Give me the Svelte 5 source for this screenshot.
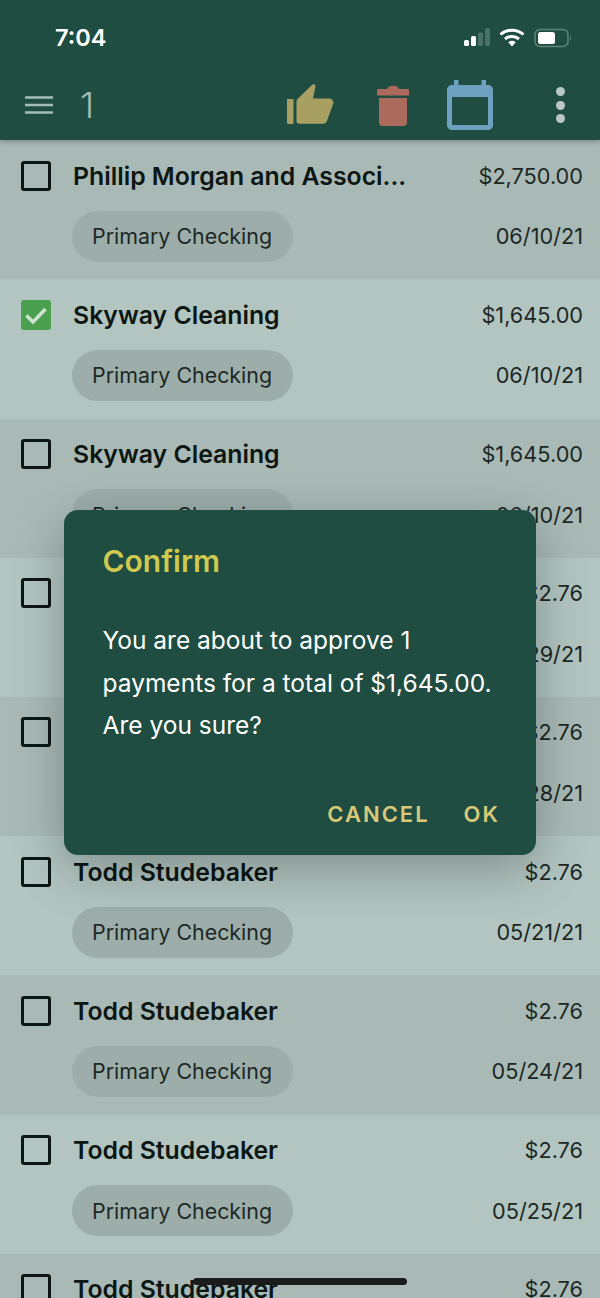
<script>
  const rows = [
    { name: 'Phillip Morgan and Associ...', amount: '$2,750.00', date: '06/10/21' },
    { name: 'Skyway Cleaning', amount: '$1,645.00', date: '06/10/21', checked: true },
    { name: 'Skyway Cleaning', amount: '$1,645.00', date: '06/10/21' },
    { name: 'Todd Studebaker', amount: '$2.76', date: '05/29/21' },
    { name: 'Todd Studebaker', amount: '$2.76', date: '05/28/21' },
    { name: 'Todd Studebaker', amount: '$2.76', date: '05/21/21' },
    { name: 'Todd Studebaker', amount: '$2.76', date: '05/24/21' },
    { name: 'Todd Studebaker', amount: '$2.76', date: '05/25/21' },
    { name: 'Todd Studebaker', amount: '$2.76', date: '05/26/21' }
  ];
</script>

<div class="screen">
  <header class="header">
    <div class="status">
      <span class="time">7:04</span>
      <div class="status-icons">
        <svg width="26" height="20" viewBox="0 0 26 20">
          <rect x="0" y="12" width="5" height="6" rx="1.500" fill="#fff" />
          <rect x="7" y="8" width="5" height="10" rx="1.500" fill="#fff" />
          <rect x="14" y="4.500" width="5" height="13.500" rx="1.500" fill="#4a7267" />
          <rect x="21" y="0" width="5" height="18" rx="1.500" fill="#4a7267" />
        </svg>
        <svg width="26" height="20" viewBox="0 0 26 20">
          <path d="M1.500 6.500C8 .7 18 .7 24.500 6.500" fill="none" stroke="#fff" stroke-width="3" />
          <path d="M6 11C10 7.500 16 7.500 20 11" fill="none" stroke="#fff" stroke-width="3" />
          <path d="M9.300 14.200C11.500 12.400 14.500 12.400 16.700 14.200L13 18.500Z" fill="#fff" />
        </svg>
        <svg width="39" height="20" viewBox="0 0 39 20">
          <rect x="1" y="1.500" width="33" height="17" rx="5" fill="none" stroke="#5f8579" stroke-width="1.500" />
          <rect x="4" y="4" width="17" height="12" rx="2.500" fill="#fff" />
          <path d="M36 7.500c1.500.5 1.500 4.500 0 5Z" fill="#5f8579" />
        </svg>
      </div>
    </div>
    <div class="toolbar">
      <svg class="menu" width="28" height="20" viewBox="0 0 28 20">
        <path d="M0 2.500H28M0 10H28M0 17.500H28" stroke="#a4bdb7" stroke-width="2.500" />
      </svg>
      <span class="count">1</span>
      <div class="actions">
        <svg class="thumb" width="47" height="42" viewBox="0 0 47 42">
          <path d="M0 15h6.500v25H1.500a1.500 1.500 0 0 1-1.500-1.500Z" fill="#a89f63" />
          <path d="M12 39.800c-1.500 0-2.500-1-2.500-2.500V17.500c0-1 .4-1.800 1-2.500L25.500 .5c1-.8 3-.3 3 1.500L26 14.500h16c3.200 0 5 2.500 4.200 5.200L40 36.800c-.8 2-2 3-4 3Z" fill="#a89f63" />
        </svg>
        <svg class="trash" width="32" height="42" viewBox="0 0 32 42">
          <path d="M0 6.500C0 5.500.7 5 1.500 5H10C11 3 13 1.800 16 1.800S21 3 22 5h8.500c.8 0 1.500.5 1.500 1.500v5H0Z" fill="#ac6a5c" />
          <path d="M2 14H30V38.500C30 40.500 28.500 42 26.500 42H5.500C3.500 42 2 40.500 2 38.500Z" fill="#ac6a5c" />
        </svg>
        <svg class="calendar" width="46" height="50" viewBox="0 0 46 50">
          <path d="M7 0h4.500v5h23V0H39v5h2c2.800 0 5 2 5 5v35c0 2.800-2.200 5-5 5H5c-2.800 0-5-2.200-5-5V10c0-3 2.200-5 5-5h2Z M5 17v28h36V17Z" fill="#6ea0bf" fill-rule="evenodd" />
        </svg>
        <div class="dots"><i></i><i></i><i></i></div>
      </div>
    </div>
  </header>

  <div class="list">
    {#each rows as row, i}
      <div class="row" class:alt={i % 2 === 1}>
        <div class="check" class:checked={row.checked}>
          {#if row.checked}
            <svg width="30" height="30" viewBox="0 0 30 30">
              <path d="M5.500 15.500L12 22L24.500 9" fill="none" stroke="#cfe3d2" stroke-width="3.500" />
            </svg>
          {/if}
        </div>
        <div class="body">
          <div class="line">
            <span class="name">{row.name}</span>
            <span class="amount">{row.amount}</span>
          </div>
          <div class="line lower">
            <span class="pill">Primary Checking</span>
            <span class="date">{row.date}</span>
          </div>
        </div>
      </div>
    {/each}
  </div>

  <div class="dialog">
    <h2>Confirm</h2>
    <p>You are about to approve 1 payments for a total of $1,645.00. Are you sure?</p>
    <div class="buttons">
      <span>CANCEL</span>
      <span>OK</span>
    </div>
  </div>

  <div class="home-bar"></div>
</div>

<style>
  :global(body) {
    margin: 0;
  }

  .screen {
    position: relative;
    width: 600px;
    height: 1298px;
    overflow: hidden;
    background: #b2c5c1;
    font-family: Inter, "Liberation Sans", sans-serif;
    color: #0c1613;
  }

  .header {
    position: relative;
    z-index: 1;
    height: 140px;
    box-sizing: border-box;
    background: #1f4d42;
    box-shadow: 0 2px 5px rgba(0, 0, 0, 0.25);
  }

  .status {
    display: flex;
    justify-content: space-between;
    align-items: center;
    height: 75px;
    padding: 0 27px 0 55px;
  }

  .time {
    font-size: 23.500px;
    font-weight: 600;
    color: #fff;
  }

  .status-icons {
    display: flex;
    align-items: center;
    gap: 9px;
  }

  .toolbar {
    display: flex;
    align-items: center;
    height: 60px;
    padding: 0 0 0 25px;
  }

  .menu {
    margin-right: 27px;
  }

  .count {
    font-size: 36px;
    font-weight: 300;
    color: #a4bdb7;
  }

  .actions {
    display: flex;
    align-items: center;
    margin-left: auto;
    padding-right: 35.500px;
  }

  .thumb {
    margin-right: 43px;
  }

  .trash {
    margin-right: 38px;
  }

  .calendar {
    margin-right: 63px;
  }

  .dots {
    display: flex;
    flex-direction: column;
    gap: 4.500px;
  }

  .dots i {
    width: 9px;
    height: 9px;
    border-radius: 50%;
    background: #b9c8c4;
  }

  .list {
    padding-top: 0.300px;
    background: #a9bab6;
  }

  .row {
    display: flex;
    box-sizing: border-box;
    height: 139.200px;
    padding: 20.400px 17px 0 21px;
    background: #a9bab6;
  }

  .row.alt {
    background: #b2c5c1;
  }

  .check {
    flex: none;
    box-sizing: border-box;
    width: 30px;
    height: 30px;
    border: 3px solid #0c1613;
    border-radius: 3px;
  }

  .check.checked {
    border: 0;
    background: #4aa04e;
  }

  .body {
    flex: 1;
    margin-left: 22px;
    min-width: 0;
  }

  .line {
    display: flex;
    justify-content: space-between;
    align-items: center;
    height: 30px;
  }

  .line.lower {
    height: 51px;
    margin-top: 20px;
    margin-left: -1px;
  }

  .name {
    font-size: 24.800px;
    font-weight: 600;
    white-space: nowrap;
  }

  .amount,
  .date {
    font-size: 21.700px;
    color: #1c2825;
  }

  .pill {
    display: flex;
    align-items: center;
    height: 51px;
    padding: 0 21px 0 20px;
    border-radius: 26px;
    background: #9daeaa;
    font-size: 21.400px;
    color: #1c2825;
  }

  .dialog {
    position: absolute;
    z-index: 2;
    left: 64px;
    top: 510px;
    width: 472px;
    height: 345px;
    box-sizing: border-box;
    padding: 32px 36px 0 38.500px;
    border-radius: 14px;
    background: #1f4d42;
    box-shadow: 0 14px 50px rgba(0, 0, 0, 0.28);
  }

  .dialog h2 {
    margin: 0;
    font-size: 30px;
    font-weight: 600;
    line-height: 38px;
    color: #cfc94f;
  }

  .dialog p {
    margin: 39px 0 0;
    font-size: 24.500px;
    line-height: 42.500px;
    color: #fff;
  }

  .buttons {
    display: flex;
    justify-content: flex-end;
    gap: 34px;
    margin-top: 54px;
    font-size: 22px;
    font-weight: 600;
    letter-spacing: 2px;
    color: #d8c978;
  }

  .home-bar {
    position: absolute;
    z-index: 3;
    left: 193px;
    top: 1278px;
    width: 214px;
    height: 7px;
    border-radius: 4px;
    background: #1a1c1c;
  }
</style>
